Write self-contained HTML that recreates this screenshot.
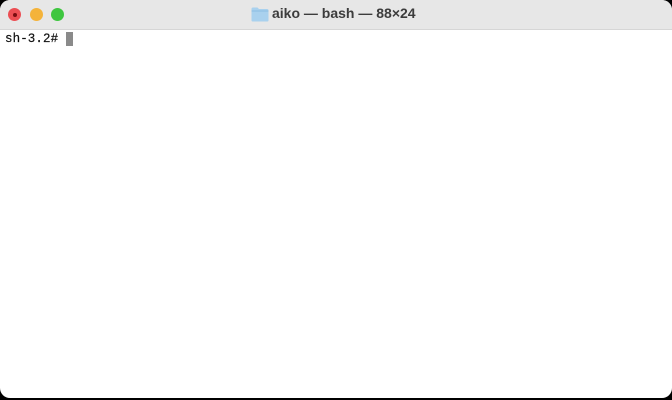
<!DOCTYPE html>
<html><head><meta charset="utf-8"><style>
html,body{margin:0;padding:0;width:672px;height:400px;background:#000;overflow:hidden}
.win{position:absolute;left:0;top:0;width:672px;height:398px;background:#fff;border-radius:10px;overflow:hidden}
.bar{position:absolute;left:0;top:0;width:672px;height:29px;background:#e7e7e7;border-bottom:1px solid #d6d6d6}
.dot{position:absolute;top:8px;width:13px;height:13px;border-radius:50%}
.title{position:absolute;left:272px;top:5px;font:bold 14px "Liberation Sans",sans-serif;color:#3c3c3c;white-space:nowrap}
.prompt{position:absolute;left:5px;top:32px;font:12.5px "Liberation Mono","DejaVu Sans Mono",monospace;color:#111;letter-spacing:0.1px;-webkit-text-stroke:0.2px #111}
.cur{position:absolute;left:66px;top:32px;width:7px;height:14px;background:#8a8a8a}
</style></head><body>
<div class="win">
<div class="bar">
<div class="dot" style="left:8px;background:#ec4e53;border:0"><div style="position:absolute;left:4.5px;top:4.5px;width:4px;height:4px;border-radius:50%;background:#7a0d10"></div></div>
<div class="dot" style="left:30px;background:#f4b33a"></div>
<div class="dot" style="left:51px;background:#3ec63f"></div>
<svg style="position:absolute;left:251px;top:7px" width="18" height="15" viewBox="0 0 18 15"><path d="M0.5 2 Q0.5 0.5 2 0.5 H6.5 L8 2 H16 Q17.5 2 17.5 3.5 V13.5 Q17.5 14.5 16.5 14.5 H1.5 Q0.5 14.5 0.5 13.5 Z" fill="#a9d1ee"/><path d="M0.5 4 H17.5" stroke="#8cbde3" stroke-width="1"/></svg>
<div class="title">aiko — bash — 88×24</div>
</div>
<div class="prompt">sh-3.2#</div>
<div class="cur"></div>
</div>
</body></html>
